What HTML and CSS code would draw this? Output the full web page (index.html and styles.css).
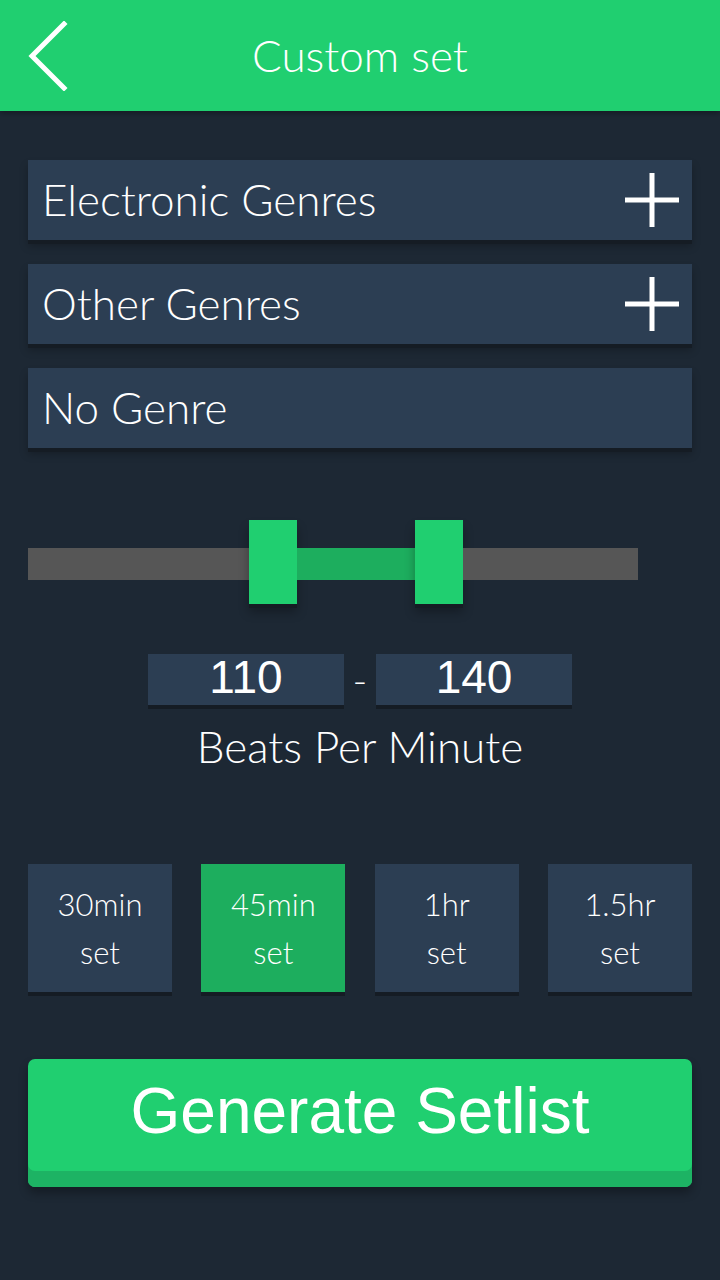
FILE: index.html
```html
<!DOCTYPE html>
<html>
<head>
<meta charset="utf-8">
<link rel="stylesheet" href="styles.css">
</head>
<body>
<div class="app">
  <header class="topbar">
    <svg class="back" width="40" height="70" viewBox="0 0 40 70">
      <polyline points="36,3 4,35 36,67" fill="none" stroke="#fff" stroke-width="5" stroke-linecap="square"/>
    </svg>
    <h1 class="title">Custom set</h1>
  </header>

  <main class="content">
    <section class="genres">
      <div class="genre-row">
        <span class="genre-label">Electronic Genres</span>
        <svg class="plus" width="54" height="54" viewBox="0 0 54 54">
          <rect x="24.5" y="0" width="5" height="54" fill="#fff"/>
          <rect x="0" y="24.5" width="54" height="5" fill="#fff"/>
        </svg>
      </div>
      <div class="genre-row">
        <span class="genre-label">Other Genres</span>
        <svg class="plus" width="54" height="54" viewBox="0 0 54 54">
          <rect x="24.5" y="0" width="5" height="54" fill="#fff"/>
          <rect x="0" y="24.5" width="54" height="5" fill="#fff"/>
        </svg>
      </div>
      <div class="genre-row">
        <span class="genre-label">No Genre</span>
      </div>
    </section>

    <section class="slider">
      <div class="track">
        <div class="track-left"></div>
        <div class="handle"></div>
        <div class="track-range"></div>
        <div class="handle"></div>
        <div class="track-right"></div>
      </div>
    </section>

    <section class="bpm">
      <div class="bpm-values">
        <div class="bpm-box">110</div>
        <span class="bpm-dash">-</span>
        <div class="bpm-box">140</div>
      </div>
      <div class="bpm-label">Beats Per Minute</div>
    </section>

    <section class="durations">
      <div class="dur">30min<br>set</div>
      <div class="dur active">45min<br>set</div>
      <div class="dur">1hr<br>set</div>
      <div class="dur">1.5hr<br>set</div>
    </section>

    <button class="generate">Generate Setlist</button>
  </main>
</div>
</body>
</html>
```

FILE: styles.css
```css
* { box-sizing: border-box; }
html, body {
  margin: 0;
  padding: 0;
  background: #1d2834;
}
body {
  width: 720px;
  height: 1280px;
  overflow: hidden;
  font-family: "Lato", "Open Sans", sans-serif;
  font-weight: 300;
  color: #fff;
}
.app {
  width: 720px;
  height: 1280px;
  background: #1d2834;
}
.topbar {
  height: 111px;
  background: #20cf70;
  display: flex;
  align-items: center;
  justify-content: center;
  position: relative;
  box-shadow: 0 2px 6px rgba(0,0,0,0.35);
}
.back {
  position: absolute;
  left: 28px;
  top: 21px;
}
.title {
  margin: 0;
  font-weight: 300;
  font-size: 44px;
  line-height: 1;
  color: #fff;
  padding-bottom: 2px;
}
.content {
  padding: 49px 28px 0 28px;
  display: flex;
  flex-direction: column;
}
.genres {
  display: flex;
  flex-direction: column;
  gap: 24px;
}
.genre-row {
  height: 80px;
  background: #2c3e53;
  display: flex;
  align-items: center;
  justify-content: space-between;
  padding: 0 13px 0 14px;
  box-shadow: 0 4px 0 #151c24, 0 6px 8px rgba(0,0,0,0.25);
}
.genre-label {
  font-size: 44px;
  line-height: 1;
  padding-bottom: 2px;
}
.plus { display: block; }
.slider {
  margin-top: 72px;
  height: 84px;
}
.track {
  width: 610px;
  height: 84px;
  display: flex;
  align-items: center;
  padding-top: 4px;
}
.track-left, .track-right {
  height: 32px;
  background: #565656;
}
.track-left { width: 221px; }
.track-right { flex: 1; }
.track-range {
  width: 118px;
  height: 32px;
  background: #1dae5e;
}
.handle {
  width: 48px;
  height: 84px;
  margin-top: -4px;
  background: #20cf70;
  box-shadow: 0 4px 0 #151c24, 0 8px 10px rgba(0,0,0,0.3);
}
.bpm {
  margin-top: 50px;
  display: flex;
  flex-direction: column;
  align-items: center;
}
.bpm-values {
  display: flex;
  align-items: center;
  gap: 0;
}
.bpm-box {
  width: 196px;
  height: 51px;
  background: #2c3e53;
  font-family: "Liberation Sans", Arial, sans-serif;
  font-weight: 400;
  font-size: 46px;
  line-height: 46px;
  text-align: center;
  box-shadow: 0 4px 0 #151c24;
}
.bpm-dash {
  width: 32px;
  text-align: center;
  font-size: 40px;
  line-height: 1;
}
.bpm-label {
  margin-top: 16px;
  font-size: 44px;
  line-height: 50px;
}
.durations {
  margin-top: 93px;
  display: flex;
  justify-content: space-between;
}
.dur {
  width: 144px;
  height: 128px;
  background: #2c3e53;
  display: flex;
  align-items: center;
  justify-content: center;
  text-align: center;
  font-size: 31px;
  font-weight: 300;
  line-height: 48px;
  box-shadow: 0 4px 0 #151c24;
}
.dur.active {
  background: #1dae5e;
}
.generate {
  margin-top: 67px;
  height: 128px;
  width: 664px;
  border: 0;
  border-radius: 7px;
  background: #20cf70;
  color: #fff;
  font-family: "Liberation Sans", Arial, sans-serif;
  font-size: 64px;
  line-height: 1;
  padding: 0 0 24px 0;
  box-shadow: inset 0 -16px 0 #1db364, 0 6px 10px rgba(0,0,0,0.3);
  cursor: pointer;
}
```
